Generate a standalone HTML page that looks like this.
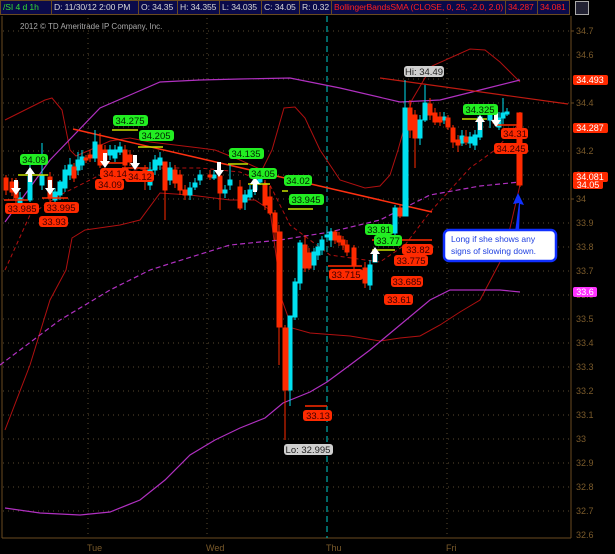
<!DOCTYPE html>
<html><head><meta charset="utf-8"><style>
html,body{margin:0;padding:0;background:#000;width:615px;height:554px;overflow:hidden;font-family:"Liberation Sans",sans-serif}
.hdr{position:absolute;top:0;left:0;height:16px;width:615px;background:#000}
.b{position:absolute;top:0;height:15px;background:#0a0a4a;border:1px solid #6a4a20;box-sizing:border-box;font-size:8.6px;line-height:13px;color:#d8d8d8;padding-left:2px;white-space:nowrap;overflow:hidden;letter-spacing:-0.1px}
</style></head><body>
<div class="hdr">
<div class="b" style="left:0;width:52px;color:#33dd33">/SI 4 d 1h</div>
<div class="b" style="left:51px;width:88px">D: 11/30/12 2:00 PM</div>
<div class="b" style="left:138px;width:40px">O: 34.35</div>
<div class="b" style="left:177px;width:43px">H: 34.355</div>
<div class="b" style="left:219px;width:43px">L: 34.035</div>
<div class="b" style="left:261px;width:39px">C: 34.05</div>
<div class="b" style="left:299px;width:33px">R: 0.32</div>
<div class="b" style="left:331px;width:175px;color:#ff2020">BollingerBandsSMA (CLOSE, 0, 25, -2.0, 2.0)</div>
<div class="b" style="left:505px;width:33px;color:#ff2020">34.287</div>
<div class="b" style="left:537px;width:33px;color:#ff2020">34.081</div>
<div style="position:absolute;left:575px;top:1px;width:12px;height:12px;border:1px solid #aaa;background:#223"></div>
</div>
<svg width="615" height="554" style="position:absolute;top:0;left:0" xmlns="http://www.w3.org/2000/svg" font-family="Liberation Sans, sans-serif">
<text x="20" y="29" fill="#aaa" font-size="8">2012 © TD Ameritrade IP Company, Inc.</text>
<g stroke="#6a4a20" fill="none">
<line x1="2" y1="16" x2="2" y2="538"/>
<line x1="2" y1="538" x2="571" y2="538"/>
<line x1="571" y1="16" x2="571" y2="538"/>
</g>
<g stroke="#5a4a30" stroke-dasharray="1,4">
<line x1="88" y1="18" x2="88" y2="536"/><line x1="207" y1="18" x2="207" y2="536"/><line x1="447" y1="18" x2="447" y2="536"/>
<line x1="3" y1="31" x2="570" y2="31"/><line x1="3" y1="55" x2="570" y2="55"/><line x1="3" y1="79" x2="570" y2="79"/><line x1="3" y1="103" x2="570" y2="103"/><line x1="3" y1="127" x2="570" y2="127"/><line x1="3" y1="151" x2="570" y2="151"/><line x1="3" y1="175" x2="570" y2="175"/><line x1="3" y1="199" x2="570" y2="199"/><line x1="3" y1="223" x2="570" y2="223"/><line x1="3" y1="247" x2="570" y2="247"/><line x1="3" y1="271" x2="570" y2="271"/><line x1="3" y1="295" x2="570" y2="295"/><line x1="3" y1="319" x2="570" y2="319"/><line x1="3" y1="343" x2="570" y2="343"/><line x1="3" y1="367" x2="570" y2="367"/><line x1="3" y1="391" x2="570" y2="391"/><line x1="3" y1="415" x2="570" y2="415"/><line x1="3" y1="439" x2="570" y2="439"/><line x1="3" y1="463" x2="570" y2="463"/><line x1="3" y1="487" x2="570" y2="487"/><line x1="3" y1="511" x2="570" y2="511"/>
</g>
<line x1="327" y1="16" x2="327" y2="538" stroke="#00cccc" stroke-dasharray="6,4"/>
<g fill="#7a5a2a" font-size="9">
<text x="576" y="34">34.7</text><text x="576" y="58">34.6</text><text x="576" y="82">34.5</text><text x="576" y="106">34.4</text><text x="576" y="130">34.3</text><text x="576" y="154">34.2</text><text x="576" y="178">34.1</text><text x="576" y="202">34</text><text x="576" y="226">33.9</text><text x="576" y="250">33.8</text><text x="576" y="274">33.7</text><text x="576" y="298">33.6</text><text x="576" y="322">33.5</text><text x="576" y="346">33.4</text><text x="576" y="370">33.3</text><text x="576" y="394">33.2</text><text x="576" y="418">33.1</text><text x="576" y="442">33</text><text x="576" y="466">32.9</text><text x="576" y="490">32.8</text><text x="576" y="514">32.7</text><text x="576" y="538">32.6</text>
<text x="87" y="551">Tue</text><text x="206" y="551">Wed</text><text x="326" y="551">Thu</text><text x="446" y="551">Fri</text>
</g>
<g stroke="#6a4a20"><line x1="571" y1="31" x2="574" y2="31"/><line x1="571" y1="103" x2="574" y2="103"/><line x1="571" y1="199" x2="574" y2="199"/></g>
<!-- bands -->
<g fill="none" stroke="#b01010" stroke-width="1">
<path d="M5,120 L25,110 45,100 52,98 62,110 70,150 76,156 90,150 110,141 130,138 150,142 175,145 200,148 215,150 240,160 262,170 272,150 284,108 295,107 305,118 320,150 340,180 365,188 380,186 390,175 398,150 412,100 432,66 470,49 485,50 500,62 520,82"/>
<path d="M5,430 L30,365 50,300 66,270 72,238 85,230 120,225 140,220 160,193 190,195 230,200 255,200 270,210 282,300 292,328 310,333 350,336 380,341 400,338 420,336 440,325 460,312 480,300 500,262 510,228 520,185"/>
</g>
<path d="M5,270 L30,215 60,195 100,175 150,168 200,168 240,172 270,185 290,225 330,255 380,262 405,245 430,212 470,168 495,150 518,125" fill="none" stroke="#b01010" stroke-dasharray="4,3"/>
<g fill="none" stroke="#b030c0" stroke-width="1.2">
<path d="M5,222 L50,160 100,108 130,95 160,82 200,80 240,79 290,78 340,88 400,102 440,100 480,90 520,80"/>
<path d="M5,508 L40,513 80,515 110,512 140,500 165,480 190,455 215,440 240,428 265,418 283,403 310,392 327,382 350,365 370,350 400,325 430,300 450,290 500,290 520,292"/>
<path d="M0,365 L60,320 110,290 150,270 175,262 230,245 280,240 330,232 380,220 430,195 480,186 520,182" stroke-dasharray="5,3"/>
</g>
<!-- trend lines -->
<line x1="73" y1="129" x2="432" y2="212" stroke="#ff3010" stroke-width="1.5"/>
<line x1="380" y1="78" x2="568" y2="104" stroke="#c01a10" stroke-width="1.2"/>
<!-- candles -->
<g stroke-width="1">
<g fill="#00e0f0" stroke="#00e0f0">
<path d="M20,192V210M30,162V202M42,143V190M55,188V205M60,180V200M65,165V192M70,158V180M78,152V175M82,150V170M95,130V162M110,145V160M115,145V162M120,142V155M150,162V190M155,155V175M160,152V170M170,162V185M190,182V200M195,178V190M200,170V185M214,170V180M225,185V198M230,165V190M245,190V210M250,185V200M255,175V195M260,172V185M290,316V406M295,278V320M300,240V290M314,248V270M318,243V260M322,236V255M327,230V240M331,228V247M370,260V290M375,250V262M395,205V238M405,80V216M420,115V145M425,85V122M444,112V124M462,130V146M470,132V148M475,130V150M480,108V140M490,110V128M499,112V130M503,98V124M507,108V116"/>
<rect x="18" y="198" width="4" height="7"/><rect x="28" y="175" width="4" height="25"/><rect x="40" y="175" width="4" height="10"/><rect x="53" y="192" width="4" height="8"/><rect x="58" y="182" width="4" height="13"/><rect x="63" y="170" width="4" height="18"/><rect x="68" y="165" width="4" height="10"/><rect x="76" y="160" width="4" height="10"/><rect x="80" y="157" width="4" height="8"/><rect x="93" y="142" width="4" height="16"/><rect x="108" y="150" width="4" height="5"/><rect x="113" y="150" width="4" height="8"/><rect x="118" y="147" width="4" height="5"/><rect x="148" y="170" width="4" height="15"/><rect x="153" y="160" width="4" height="10"/><rect x="158" y="158" width="4" height="7"/><rect x="168" y="168" width="4" height="12"/><rect x="188" y="188" width="4" height="7"/><rect x="193" y="183" width="4" height="4"/><rect x="198" y="175" width="4" height="5"/><rect x="212" y="175" width="4" height="3"/><rect x="223" y="190" width="4" height="3"/><rect x="228" y="180" width="4" height="5"/><rect x="243" y="195" width="4" height="7"/><rect x="248" y="190" width="4" height="7"/><rect x="253" y="180" width="4" height="10"/><rect x="258" y="178" width="4" height="4"/><rect x="288" y="316" width="4" height="74"/><rect x="293" y="282" width="4" height="35"/><rect x="298" y="243" width="4" height="40"/><rect x="312" y="252" width="4" height="13"/><rect x="316" y="247" width="4" height="8"/><rect x="320" y="240" width="4" height="10"/><rect x="325" y="235" width="4" height="2"/><rect x="329" y="232" width="4" height="8"/><rect x="368" y="265" width="4" height="20"/><rect x="373" y="255" width="4" height="7"/><rect x="393" y="208" width="4" height="25"/><rect x="403" y="108" width="5" height="108"/><rect x="418" y="120" width="4" height="18"/><rect x="423" y="103" width="4" height="17"/><rect x="442" y="117" width="4" height="3"/><rect x="460" y="136" width="4" height="7"/><rect x="468" y="137" width="4" height="6"/><rect x="473" y="135" width="4" height="10"/><rect x="478" y="117" width="4" height="20"/><rect x="488" y="113" width="4" height="7"/><rect x="497" y="118" width="4" height="9"/><rect x="501" y="113" width="4" height="5"/><rect x="505" y="112" width="4" height="2"/>
</g>
<g fill="#ff2a00" stroke="#ff2a00">
<path d="M6,175V195M12,178V196M16,178V205M50,172V205M74,163V182M86,155V163M90,150V162M100,133V168M105,145V165M125,145V170M130,150V166M145,165V190M165,162V220M175,165V188M180,170V195M185,185V200M210,170V180M220,170V210M240,180V210M265,180V210M270,186V215M275,210V240M279,225V365M285,325V440M305,235V272M309,248V270M335,230V244M339,232V246M343,236V250M347,240V256M354,245V270M365,262V288M400,205V218M410,100V138M415,110V168M430,98V120M435,108V125M440,112V126M448,115V130M453,125V148M458,135V152M466,130V145M495,115V126M520,112V187"/>
<rect x="4" y="178" width="4" height="12"/><rect x="10" y="182" width="4" height="10"/><rect x="14" y="182" width="4" height="16"/><rect x="48" y="177" width="4" height="20"/><rect x="72" y="167" width="4" height="11"/><rect x="84" y="158" width="4" height="2"/><rect x="88" y="155" width="4" height="3"/><rect x="98" y="145" width="4" height="20"/><rect x="103" y="150" width="4" height="10"/><rect x="123" y="150" width="4" height="15"/><rect x="128" y="155" width="4" height="7"/><rect x="143" y="170" width="4" height="10"/><rect x="163" y="162" width="4" height="28"/><rect x="173" y="170" width="4" height="13"/><rect x="178" y="175" width="4" height="15"/><rect x="183" y="190" width="4" height="5"/><rect x="208" y="175" width="4" height="2"/><rect x="218" y="176" width="4" height="17"/><rect x="238" y="187" width="4" height="21"/><rect x="263" y="185" width="4" height="20"/><rect x="268" y="197" width="4" height="16"/><rect x="273" y="213" width="4" height="19"/><rect x="277" y="232" width="5" height="95"/><rect x="283" y="328" width="5" height="62"/><rect x="303" y="245" width="4" height="23"/><rect x="307" y="253" width="4" height="15"/><rect x="333" y="232" width="4" height="8"/><rect x="337" y="236" width="4" height="6"/><rect x="341" y="240" width="4" height="5"/><rect x="345" y="245" width="4" height="7"/><rect x="352" y="248" width="4" height="18"/><rect x="363" y="268" width="4" height="15"/><rect x="398" y="208" width="4" height="8"/><rect x="408" y="108" width="4" height="22"/><rect x="413" y="115" width="4" height="23"/><rect x="428" y="104" width="4" height="11"/><rect x="433" y="113" width="4" height="9"/><rect x="438" y="117" width="4" height="5"/><rect x="446" y="118" width="4" height="9"/><rect x="451" y="128" width="4" height="14"/><rect x="456" y="140" width="4" height="5"/><rect x="464" y="137" width="4" height="5"/><rect x="493" y="120" width="4" height="3"/><rect x="517" y="113" width="5" height="72"/>
</g>
</g>
<!-- level lines -->
<g stroke="#c8e000" stroke-width="1.5">
<line x1="18" y1="175" x2="48" y2="175"/><line x1="112" y1="130" x2="138" y2="130"/><line x1="138" y1="147" x2="163" y2="147"/><line x1="228" y1="164" x2="248" y2="164"/><line x1="248" y1="184" x2="270" y2="184"/><line x1="282" y1="191" x2="288" y2="191"/><line x1="288" y1="209" x2="313" y2="209"/><line x1="372" y1="250" x2="395" y2="250"/><line x1="462" y1="119" x2="487" y2="119"/>
</g>
<g stroke="#ff2a00" stroke-width="1.5">
<line x1="4" y1="200" x2="28" y2="200"/><line x1="42" y1="198" x2="68" y2="198"/><line x1="98" y1="163" x2="123" y2="163"/><line x1="122" y1="168" x2="148" y2="168"/><line x1="328" y1="266" x2="362" y2="266"/><line x1="372" y1="240" x2="432" y2="240"/><line x1="305" y1="406" x2="327" y2="406"/><line x1="496" y1="125" x2="520" y2="125"/>
</g>
<!-- arrows -->
<g fill="#fff">
<path d="M14,180h4v8h3l-5,7-5-7h3z"/><path d="M48,180h4v8h3l-5,7-5-7h3z"/><path d="M103,153h4v8h3l-5,7-5-7h3z"/><path d="M133,155h4v8h3l-5,7-5-7h3z"/><path d="M217,162h4v8h3l-5,7-5-7h3z"/><path d="M494,112h4v8h3l-5,7-5-7h3z"/>
<path d="M28,182h4v-8h3l-5,-7-5,7h3z"/><path d="M253,192h4v-8h3l-5,-7-5,7h3z"/><path d="M373,262h4v-8h3l-5,-7-5,7h3z"/><path d="M478,130h4v-8h3l-5,-7-5,7h3z"/>
</g>
<!-- labels -->
<g font-size="9.5" text-anchor="middle">
<g fill="#22ee22"><rect x="20" y="154" width="28" height="11" rx="3"/><rect x="113" y="115" width="35" height="11" rx="3"/><rect x="139" y="130" width="35" height="11" rx="3"/><rect x="229" y="148" width="35" height="11" rx="3"/><rect x="249" y="168" width="28" height="11" rx="3"/><rect x="284" y="175" width="28" height="11" rx="3"/><rect x="289" y="194" width="35" height="11" rx="3"/><rect x="365" y="224" width="28" height="11" rx="3"/><rect x="374" y="235" width="28" height="11" rx="3"/><rect x="463" y="104" width="35" height="11" rx="3"/></g>
<g fill="#002200"><text x="34" y="163">34.09</text><text x="130" y="124">34.275</text><text x="156" y="139">34.205</text><text x="246" y="157">34.135</text><text x="263" y="177">34.05</text><text x="298" y="184">34.02</text><text x="306" y="203">33.945</text><text x="379" y="233">33.81</text><text x="388" y="244">33.77</text><text x="480" y="113">34.325</text></g>
<g fill="#ff2a00"><rect x="5" y="203" width="34" height="11" rx="3"/><rect x="44" y="202" width="35" height="11" rx="3"/><rect x="39" y="216" width="29" height="11" rx="3"/><rect x="100" y="168" width="29" height="11" rx="3"/><rect x="95" y="179" width="29" height="11" rx="3"/><rect x="125" y="171" width="29" height="11" rx="3"/><rect x="329" y="269" width="34" height="11" rx="3"/><rect x="391" y="276" width="32" height="11" rx="3"/><rect x="384" y="294" width="29" height="11" rx="3"/><rect x="402" y="244" width="31" height="11" rx="3"/><rect x="394" y="255" width="34" height="11" rx="3"/><rect x="501" y="128" width="27" height="11" rx="3"/><rect x="494" y="143" width="34" height="11" rx="3"/><rect x="303" y="410" width="29" height="11" rx="3"/></g>
<g fill="#400000"><text x="22" y="212">33.985</text><text x="61" y="211">33.995</text><text x="54" y="225">33.93</text><text x="115" y="177">34.14</text><text x="110" y="188">34.09</text><text x="140" y="180">34.12</text><text x="346" y="278">33.715</text><text x="407" y="285">33.685</text><text x="399" y="303">33.61</text><text x="418" y="253">33.82</text><text x="411" y="264">33.775</text><text x="515" y="137">34.31</text><text x="511" y="152">34.245</text><text x="318" y="419">33.13</text></g>
<g fill="#cfcfcf"><rect x="404" y="66" width="40" height="11" rx="3"/><rect x="284" y="444" width="49" height="11" rx="3"/></g>
<g fill="#222"><text x="424" y="75">Hi: 34.49</text><text x="308" y="453">Lo: 32.995</text></g>
<g fill="#ff2a00"><rect x="573" y="75" width="35" height="10" rx="2"/><rect x="573" y="123" width="35" height="10" rx="2"/><rect x="573" y="172" width="35" height="10" rx="2"/><rect x="573" y="180" width="30" height="9" rx="2"/></g>
<rect x="573" y="287" width="24" height="10" rx="2" fill="#ff33ff"/>
<g fill="#fff" font-size="9"><text x="590" y="83">34.493</text><text x="590" y="131">34.287</text><text x="590" y="180">34.081</text><text x="588" y="188">34.05</text><text x="585" y="295">33.6</text></g>
</g>
<!-- callout -->
<path d="M515,232 L519,203 L513,204 L518,193 L524,205 L520,204 L519,232Z" fill="#1030ff"/>
<rect x="444" y="230" width="112" height="31" rx="5" fill="#fff" stroke="#1030ff" stroke-width="2.5"/>
<g fill="#2040e0" font-size="8.5"><text x="451" y="242">Long if she shows any</text><text x="451" y="254">signs of slowing down.</text></g>
</svg>
</body></html>
